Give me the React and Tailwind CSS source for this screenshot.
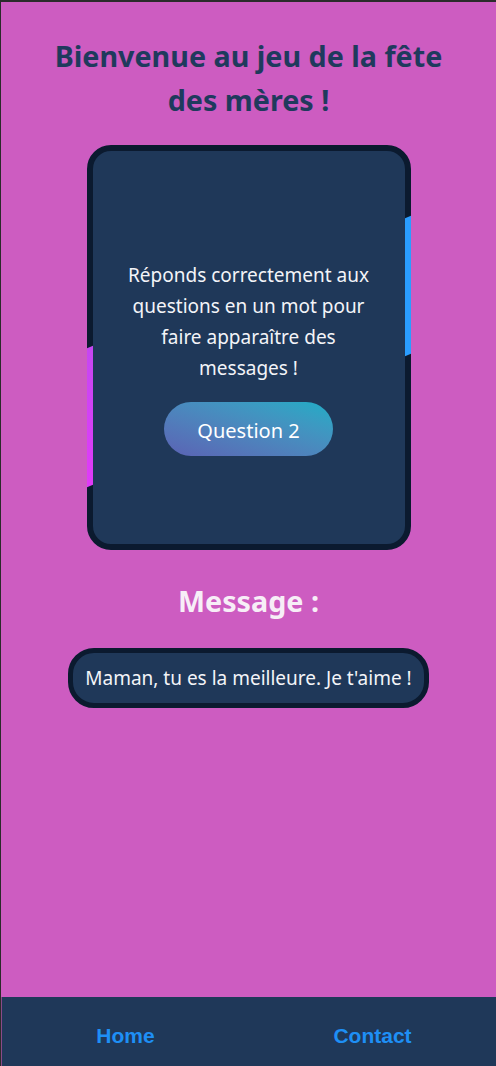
export default function App() {
  const font = { fontFamily: '"Noto Sans", "Open Sans", sans-serif' };
  const navFont = { fontFamily: '"Liberation Sans", Arial, sans-serif' };

  return (
    <div className="min-h-screen flex flex-col bg-[#2b2b2b] pt-[2px] pl-[1px]">
      <main className="flex-1 flex flex-col items-center bg-[#cd5cc1]" style={font}>
        {/* Title */}
        <h1 className="mt-[32px] px-[40px] text-center text-[28.7px] leading-[44px] font-bold text-[#1f3a5d]">
          Bienvenue au jeu de la fête des mères !
        </h1>

        {/* Question card */}
        <div className="relative mt-[23px] w-[324px] h-[405px] rounded-[24px] border-[6px] border-[#0b1a2f] bg-[#1f3859]">
          {/* glowing border pieces */}
          <div className="absolute right-[-6px] top-[66px] w-[6px] h-[138px] -skew-y-[22deg] bg-[#2a9dff]" />
          <div className="absolute left-[-6px] top-[196px] w-[6px] h-[139px] -skew-y-[22deg] bg-gradient-to-b from-[#c547f2] to-[#e03af8]" />

          <div className="flex flex-col items-center pt-[109px]">
            <p className="w-[264px] text-center text-[19px] leading-[31px] text-[#f3f4f8]">
              Réponds correctement aux questions en un mot pour faire apparaître des messages !
            </p>
            <button className="mt-[18px] w-[169px] h-[54px] pt-[3px] rounded-full bg-gradient-to-tr from-[#5a62b4] to-[#1aadc6] text-[20px] text-white">
              Question 2
            </button>
          </div>
        </div>

        {/* Message */}
        <h2 className="mt-[29px] text-[28.7px] leading-[44px] font-bold text-[#f7eef7]">
          Message :
        </h2>
        <div className="mt-[25px] w-[361px] h-[60px] flex items-center justify-center rounded-[26px] border-[5px] border-[#0b1a2f] bg-[#1f3859]">
          <span className="text-[19px] text-[#f3f4f8]">
            Maman, tu es la meilleure. Je t'aime !
          </span>
        </div>
      </main>

      {/* Bottom nav */}
      <footer className="h-[69px] grid grid-cols-2 pt-[27px] bg-[#1f3859] border-l border-[#8a4a88]">
        <a href="#" className="justify-self-center text-[21px] leading-[24px] font-bold text-[#1e8ff5]" style={navFont}>
          Home
        </a>
        <a href="#" className="justify-self-center text-[21px] leading-[24px] font-bold text-[#1e8ff5]" style={navFont}>
          Contact
        </a>
      </footer>
    </div>
  );
}
